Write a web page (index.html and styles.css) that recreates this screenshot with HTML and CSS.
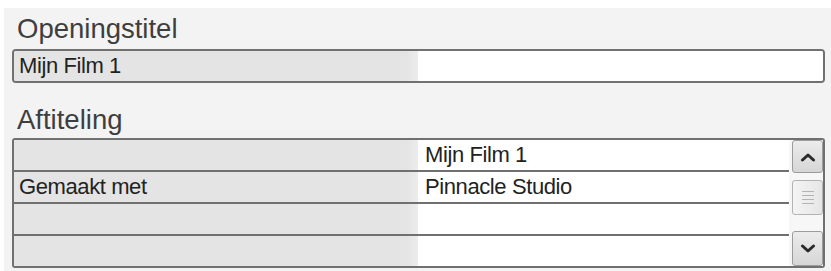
FILE: index.html
```html
<!DOCTYPE html>
<html>
<head>
<meta charset="utf-8">
<link rel="stylesheet" href="styles.css">
</head>
<body>
<div class="panel">
  <div class="heading">Openingstitel</div>
  <div class="field">
    <div class="label">Mijn Film 1</div>
    <div class="value"></div>
  </div>
  <div class="heading heading-2">Aftiteling</div>
  <div class="table">
    <div class="rows">
      <div class="row"><div class="label"></div><div class="value">Mijn Film 1</div></div>
      <div class="row"><div class="label">Gemaakt met</div><div class="value">Pinnacle Studio</div></div>
      <div class="row"><div class="label"></div><div class="value"></div></div>
      <div class="row"><div class="label"></div><div class="value"></div></div>
    </div>
    <div class="scrollbar">
      <div class="sb-btn">
        <svg width="16" height="10" viewBox="0 0 16 10"><path d="M2.5 8 L8 3 L13.5 8" fill="none" stroke="#2a2a2a" stroke-width="3" stroke-linecap="round" stroke-linejoin="round"/></svg>
      </div>
      <div class="sb-thumb">
        <span class="grip"></span><span class="grip"></span><span class="grip"></span><span class="grip"></span>
      </div>
      <div class="sb-track"></div>
      <div class="sb-btn sb-down">
        <svg width="16" height="10" viewBox="0 0 16 10"><path d="M2.5 2 L8 7 L13.5 2" fill="none" stroke="#2a2a2a" stroke-width="3" stroke-linecap="round" stroke-linejoin="round"/></svg>
      </div>
    </div>
  </div>
</div>
</body>
</html>
```
FILE: styles.css
```css
html, body {
  margin: 0;
  padding: 0;
  background: #ffffff;
}

body {
  font-family: "Liberation Sans", Arial, sans-serif;
}

.panel {
  margin-top: 8px;
  margin-left: 4px;
  height: 263px;
  background: #f3f3f3;
  padding: 6px 6px 0 8px;
  box-sizing: border-box;
}

.heading {
  font-size: 27.5px;
  line-height: 30px;
  color: #3e3e3e;
  padding-left: 5px;
  height: 30px;
}

.heading-2 {
  margin-top: 22px;
}

.field {
  margin-top: 5px;
  display: flex;
  border: 2px solid #707070;
  border-radius: 4px;
  height: 30px;
  overflow: hidden;
}

.label {
  width: 404px;
  flex: none;
  background: linear-gradient(to right, #e4e4e4 0, #e4e4e4 392px, #ececec 404px);
  font-size: 22px;
  line-height: 30px;
  color: #222222;
  padding-left: 5px;
  box-sizing: border-box;
  letter-spacing: -0.4px;
}

.value {
  flex: 1;
  background: #ffffff;
  font-size: 22px;
  line-height: 30px;
  color: #222222;
  padding-left: 7px;
  letter-spacing: -0.4px;
}

.table {
  margin-top: 3px;
  display: flex;
  border: 2px solid #707070;
  border-radius: 3px;
  height: 126px;
  background: #ffffff;
}

.rows {
  width: 775px;
  flex: none;
  display: flex;
  flex-direction: column;
}

.row {
  display: flex;
  height: 30px;
}

.row + .row {
  border-top: 2px solid #707070;
}

.scrollbar {
  flex: 1;
  display: flex;
  flex-direction: column;
  padding-left: 3px;
  background: #f7f7f7;
}

.sb-btn {
  height: 31px;
  border: 1px solid #9c9c9c;
  border-radius: 3px;
  background: linear-gradient(#ececec, #d6d6d6);
  display: flex;
  align-items: center;
  justify-content: center;
}

.sb-down {
  height: 33px;
}

.sb-thumb {
  margin-top: 7px;
  height: 33px;
  border: 1px solid #b3b3b3;
  border-radius: 3px;
  background: linear-gradient(to right, #f4f4f4, #e6e6e6);
  display: flex;
  flex-direction: column;
  align-items: center;
  justify-content: center;
  gap: 3px;
}

.grip {
  display: block;
  width: 12px;
  height: 1px;
  background: #b4b4b4;
}

.sb-track {
  flex: 1;
}
```
